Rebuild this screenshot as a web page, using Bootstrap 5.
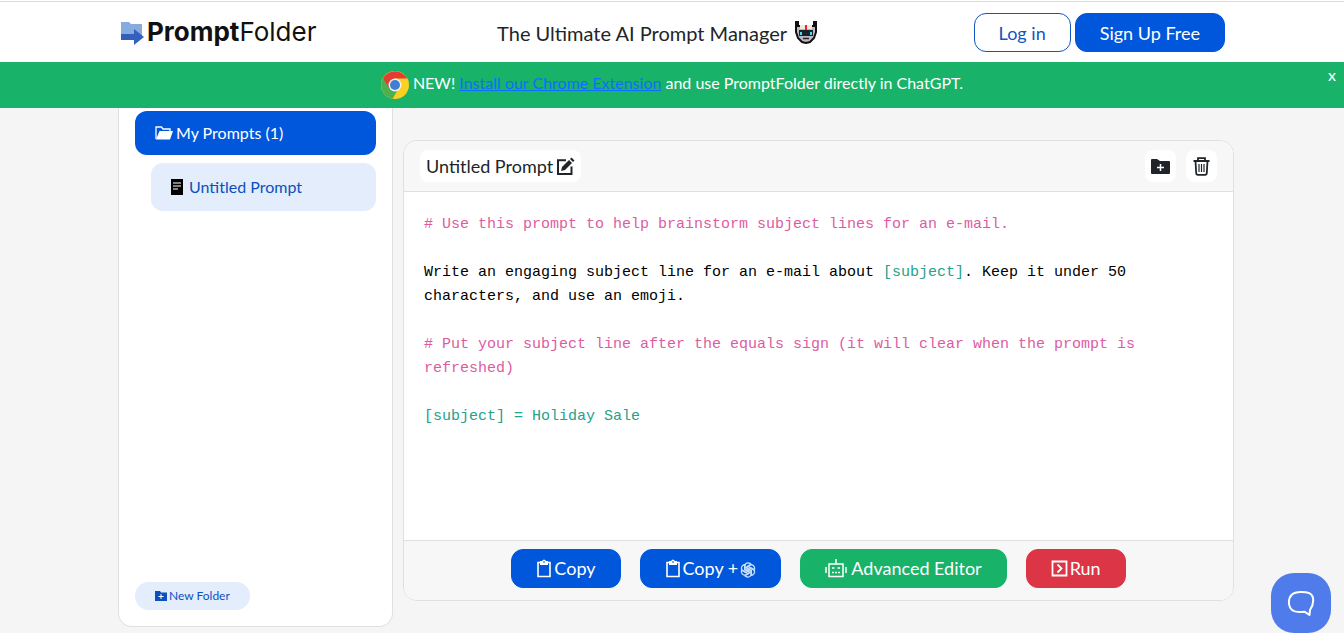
<!DOCTYPE html>
<html lang="en">
<head>
<meta charset="utf-8">
<meta name="viewport" content="width=device-width, initial-scale=1">
<title>PromptFolder</title>
<link href="https://cdn.jsdelivr.net/npm/bootstrap@5.3.0/dist/css/bootstrap.min.css" rel="stylesheet">
<style>
  :root { --pf-blue: #0057dc; --pf-green: #19b269; --pf-red: #dc3545; --pf-pale: #e4edfb; --pf-line: #e0e0e0; }
  body { font-family: Lato, sans-serif; background: #f5f5f5; color: #212529; }
  svg { flex: none; }
  .site-header { height: 62px; border-top: 1px solid #d9dcdc; margin-top: 1px; margin-bottom: -1px; }
  .shell { width: 100%; max-width: 1132px; margin: 0 auto; padding: 0 4px 0 12px; }
  .header-row { padding-right: 13px; }
  .brand-link { gap: 2px; padding-left: 2px; }
  .brand-name { font: 26px/28px Inter, sans-serif; color: #111; padding-bottom: 2px; }
  .brand-name b { font-weight: 700; }
  .tagline { font-size: 20px; line-height: 28px; }
  .pf-btn { --bs-btn-font-size: 18px; --bs-btn-line-height: 1; --bs-btn-padding-x: 24px; --bs-btn-border-radius: 12px; --bs-btn-color: #fff; --bs-btn-hover-color: #fff; height: 39px; display: inline-flex; align-items: center; justify-content: center; gap: 2px; white-space: nowrap; }
  .pf-blue { --bs-btn-bg: var(--pf-blue); --bs-btn-border-color: var(--pf-blue); --bs-btn-hover-bg: #0049ba; }
  .pf-green { --bs-btn-bg: var(--pf-green); --bs-btn-border-color: var(--pf-green); --bs-btn-hover-bg: #159759; gap: 4px; }
  .pf-red { --bs-btn-bg: var(--pf-red); --bs-btn-border-color: var(--pf-red); --bs-btn-hover-bg: #bb2d3b; }
  .pf-line { --bs-btn-color: #1255c0; --bs-btn-border-color: #1255c0; --bs-btn-hover-bg: var(--pf-blue); }
  .notice { min-height: 46px; background: var(--pf-green); color: #fff; font-size: 16px; line-height: 24px; position: relative; }
  .notice span { padding-bottom: 4px; }
  .notice a { color: #0d6efd; }
  .notice-close { position: absolute; right: 8px; top: 3px; font-size: 16px; line-height: 20px; }
  .sidebar { width: 275px; background: #fff; border: 1px solid var(--pf-line); border-top: 0; border-radius: 0 0 14px 14px; padding: 3px 16px 16px; margin-bottom: 6px; }
  .folder-btn { height: 44px; border-radius: 12px; background: var(--pf-blue); color: #fff; padding: 0 20px; font-size: 16px; gap: 3px; }
  .prompt-btn { height: 48px; border-radius: 12px; background: var(--pf-pale); color: #0b50bd; padding: 0 18px; font-size: 16px; gap: 4px; margin: 8px 0 0 16px; }
  .new-folder { height: 28px; border-radius: 14px; background: var(--pf-pale); color: #0b50bd; padding: 0 20px; font-size: 12px; gap: 2px; }
  .editor { margin: 32px 0 32px 10px; border: 1px solid var(--pf-line); border-radius: 14px; background: #fff; overflow: hidden; min-width: 0; }
  .editor-head { height: 51px; background: #f7f7f7; border-bottom: 1px solid var(--pf-line); padding: 0 16px; gap: 10px; }
  .editor-foot { height: 60px; background: #f7f7f7; border-top: 1px solid var(--pf-line); gap: 19px; padding-bottom: 5px; }
  .white-btn { height: 32px; min-width: 31px; border: 0; border-radius: 8px; background: #fff; color: #212529; padding: 0 6px; font-size: 18px; gap: 3px; }
  .prompt-text { font: 15px/24px "Liberation Mono", monospace; color: #000; padding: 21px 20px; white-space: pre-wrap; margin: 0; overflow: visible; }
  .note { color: #dd5c9f; }
  .slot { color: #27a08c; }
  .chat-btn { position: fixed; right: 13px; bottom: 0; width: 60px; height: 60px; border: 0; border-radius: 23px; background: #507bea; }
</style>
</head>
<body class="min-vh-100 d-flex flex-column">
<header class="bg-white">
  <div class="site-header d-flex align-items-center">
    <div class="shell header-row d-flex align-items-center justify-content-between">
      <a href="#" class="brand-link d-flex align-items-center text-decoration-none">
        <svg width="25" height="24" viewBox="0 0 25 24" aria-hidden="true"><path d="M1 1h8l2 2h11v14H1z" fill="#86abdf"/><path d="M1 13h13V8l10 8-10 8v-5H1z" fill="#3360bd"/></svg>
        <span class="brand-name"><b>Prompt</b>Folder</span>
      </a>
      <div class="tagline d-flex align-items-center gap-2 ms-4">The Ultimate AI Prompt Manager
        <svg width="22" height="23" viewBox="0 0 22 23" aria-hidden="true"><path d="M1 1h2v4h16V1h2v10l-2 6-4 4-4 1-4-1-4-4-2-6z" fill="#bdb9c3" stroke="#111" stroke-width="2"/><path d="M5 4h12v4H5z" fill="#f6e9dc"/><path d="M10 4h2v5h-2z" fill="#e32637"/><path d="M4 9h14v6H4z" fill="#16242c"/><path d="M5 11h2v3H5zm10 0h2v3h-2z" fill="#5fd6df"/><path d="M8 17.500h6" stroke="#222" stroke-width="1.500"/></svg>
      </div>
      <div class="d-flex gap-1">
        <a href="#" role="button" class="btn pf-btn pf-line">Log in</a>
        <a href="#" role="button" class="btn pf-btn pf-blue">Sign Up Free</a>
      </div>
    </div>
  </div>
</header>
<div class="notice d-flex align-items-center justify-content-center">
  <svg width="28" height="28" viewBox="0 0 28 28" class="me-1" aria-hidden="true"><circle cx="14" cy="14" r="14" fill="#fbd023"/><path d="M14 14 2 7a14 14 0 0 0 9.500 20.800l6-10z" fill="#4caf50"/><path d="M2 7a14 14 0 0 1 24.200 0.500H14L8 17z" fill="#e23e34"/><circle cx="14" cy="14" r="6.500" fill="#f2f2f2"/><circle cx="14" cy="14" r="5" fill="#3e7fd0"/></svg>
  <span>NEW! <a href="#">Install our Chrome Extension</a> and use PromptFolder directly in ChatGPT.</span>
  <button type="button" class="notice-close btn p-0 border-0 text-white" aria-label="Close">x</button>
</div>
<main class="shell d-flex flex-grow-1">
  <aside class="sidebar d-flex flex-column flex-shrink-0">
    <button type="button" class="folder-btn btn border-0 d-flex align-items-center">
      <svg width="18" height="16" viewBox="0 0 18 16" aria-hidden="true"><path d="M1 14V2h5.500l1.500 2h7v2" fill="none" stroke="#fff" stroke-width="1.300"/><path d="M4.500 6H18l-3 8.500H1z" fill="#fff"/></svg>
      My Prompts (1)
    </button>
    <button type="button" class="prompt-btn btn border-0 d-flex align-items-center">
      <svg width="16" height="18" viewBox="0 0 16 18" aria-hidden="true"><path d="M2 1h12v16H2z" fill="#000"/><path d="M4 5h8M4 8h8M4 11h5" stroke="#fff" stroke-width="1.200"/></svg>
      Untitled Prompt
    </button>
    <button type="button" class="new-folder btn border-0 d-flex align-items-center mt-auto align-self-start">
      <svg width="12" height="12" viewBox="0 0 12 12" aria-hidden="true"><path d="M0 1h5l1 1.500h6V11H0z" fill="#0b50bd"/><path d="M6 4v5M3.500 6.500h5" stroke="#fff"/></svg>
      New Folder
    </button>
  </aside>
  <section class="editor d-flex flex-column flex-grow-1">
    <div class="editor-head d-flex align-items-center">
      <button type="button" class="white-btn d-flex align-items-center me-auto">Untitled Prompt
        <svg width="19" height="19" viewBox="0 0 19 19" aria-hidden="true"><path d="M10 3.200H2V17h13.500V9.500" fill="none" stroke="#212529" stroke-width="2"/><path d="m5 14 1-4 7-7 3 3-7 7z" fill="#212529"/><path d="M14 2l1.500-1.500 3 3L17 5z" fill="#212529"/></svg>
      </button>
      <button type="button" class="white-btn d-flex align-items-center" aria-label="Add to folder">
        <svg width="19" height="17" viewBox="0 0 19 17" aria-hidden="true"><path d="M0 2q0-1 1-1h5l3 2h9q1 0 1 1v11q0 1-1 1H1q-1 0-1-1z" fill="#212529"/><path d="M9.500 6v7M6 9.500h7" stroke="#fff" stroke-width="1.500"/></svg>
      </button>
      <button type="button" class="white-btn d-flex align-items-center justify-content-center" aria-label="Delete">
        <svg width="17" height="19" viewBox="0 0 17 19" fill="none" stroke="#212529" aria-hidden="true"><path d="M0.500 4h16" stroke-width="2"/><path d="M5 4V1.200h7V4M2.500 4l.7 12q.1 1.800 1.800 1.800h7q1.700 0 1.800-1.800l.7-12" stroke-width="1.800"/><path d="M6 7v8M8.500 7v8M11 7v8" stroke-width="1.200"/></svg>
      </button>
    </div>
    <pre class="prompt-text flex-grow-1"><span class="note"># Use this prompt to help brainstorm subject lines for an e-mail.</span>

Write an engaging subject line for an e-mail about <span class="slot">[subject]</span>. Keep it under 50 characters, and use an emoji.

<span class="note"># Put your subject line after the equals sign (it will clear when the prompt is refreshed)</span>

<span class="slot">[subject] = Holiday Sale</span></pre>
    <div class="editor-foot d-flex align-items-center justify-content-center">
      <button type="button" class="btn pf-btn pf-blue">
        <svg width="16" height="19" viewBox="0 0 16 19" aria-hidden="true"><path d="M2 3.500h12V17.500H2z" fill="none" stroke="#fff" stroke-width="1.600"/><path d="M4 2h2q2-3 4 0h2v4H4z" fill="#fff"/><path d="M8 2v2" stroke="#0057dc"/></svg>Copy
      </button>
      <button type="button" class="btn pf-btn pf-blue">
        <svg width="16" height="19" viewBox="0 0 16 19" aria-hidden="true"><path d="M2 3.500h12V17.500H2z" fill="none" stroke="#fff" stroke-width="1.600"/><path d="M4 2h2q2-3 4 0h2v4H4z" fill="#fff"/><path d="M8 2v2" stroke="#0057dc"/></svg>Copy +
        <svg width="16" height="16" viewBox="-8 -8 16 16" class="mt-1" fill="none" stroke="#c9e0fb" stroke-width="1.300" aria-hidden="true"><g id="petal"><path d="M-3 1.700V-4.500Q-2.500-7.300.5-7 2-6.800 3-5.700L-1-3.300V1"/></g><use href="#petal" transform="rotate(60)"/><use href="#petal" transform="rotate(120)"/><use href="#petal" transform="rotate(180)"/><use href="#petal" transform="rotate(240)"/><use href="#petal" transform="rotate(300)"/></svg>
      </button>
      <button type="button" class="btn pf-btn pf-green">
        <svg width="22" height="19" viewBox="0 0 22 19" fill="none" stroke="#fff" stroke-width="1.500" aria-hidden="true"><path d="M4 5h14v12.500H4zM11 5V0M1 8v6M21 8v6"/><path d="M7 9h2.500M12.500 9H15M7 13.500h2m1 0h2m1 0h2" stroke-width="1.600"/></svg>Advanced Editor
      </button>
      <button type="button" class="btn pf-btn pf-red">
        <svg width="17" height="17" viewBox="0 0 17 17" fill="none" stroke="#fff" aria-hidden="true"><path d="M1.500 1.500h14v14h-14z" stroke-width="1.800"/><path d="m6.500 4.500 4 4-4 4" stroke-width="1.800"/></svg>Run
      </button>
    </div>
  </section>
</main>
<button type="button" class="chat-btn d-flex align-items-center justify-content-center" aria-label="Open chat">
  <svg width="28" height="28" viewBox="0 0 28 28" fill="none" stroke="#fff" stroke-width="2" stroke-linejoin="round" aria-hidden="true"><path d="M14 3C21 3 25 4 26 9q1 6-3 12l-.5 5-5-3.300Q15 23 12 23 3 23 2 15 1 3 14 3z"/></svg>
</button>
<script src="https://cdn.jsdelivr.net/npm/bootstrap@5.3.0/dist/js/bootstrap.bundle.min.js"></script>
</body>
</html>
